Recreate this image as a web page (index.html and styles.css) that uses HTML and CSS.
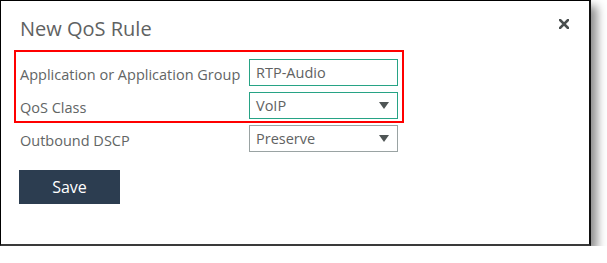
FILE: index.html
```html
<!DOCTYPE html>
<html lang="en">
<head>
	<meta charset="UTF-8">
	<title>New QoS Rule</title>
	<link rel="stylesheet" href="styles.css">
</head>
<body>
	<div class="dialog">
		<div class="head">
			<h2 class="title">New QoS Rule</h2>
			<svg class="close" width="10" height="10" viewBox="0 0 10 10">
				<path d="M1 1L9 9M9 1L1 9" stroke="#4a4f4f" stroke-width="2.6" stroke-linecap="square"/>
			</svg>
		</div>
		<div class="form">
			<div class="mark">
				<div class="row">
					<label class="label">Application or Application Group</label>
					<div class="field active">RTP-Audio</div>
				</div>
				<div class="row">
					<label class="label">QoS Class</label>
					<div class="field active select">
						<span>VoIP</span>
						<svg width="10" height="7" viewBox="0 0 10 7"><path d="M0 0H10L5 7Z" fill="#4f5555"/></svg>
					</div>
				</div>
			</div>
			<div class="row last">
				<label class="label">Outbound DSCP</label>
				<div class="field select">
					<span>Preserve</span>
					<svg width="10" height="7" viewBox="0 0 10 7"><path d="M0 0H10L5 7Z" fill="#4f5555"/></svg>
				</div>
			</div>
			<button class="save">Save</button>
		</div>
	</div>
</body>
</html>
```

FILE: styles.css
```css
*{margin: 0;padding: 0;box-sizing: border-box;}
body{background-color: #fff;font-family: "Open Sans", "Liberation Sans", sans-serif;}
.dialog{
	width: 591px;
	height: 246px;
	background: #fff;
	border-style: solid;
	border-width: 1px 2px 2px 1px;
	border-color: #000 #111 #3a3a3a #000;
	box-shadow: 6px 6px 9px rgba(0,0,0,0.45);
}
.head{
	display: flex;
	justify-content: space-between;
	align-items: flex-start;
	padding: 14px 20px 0 19px;
}
.title{
	font-size: 20px;
	font-weight: 400;
	line-height: 27px;
	color: #5f6262;
}
.close{
	margin-top: 4px;
}
.form{
	padding: 8px 0 0 19px;
}
.mark{
	width: 390px;
	margin-left: -6px;
	border: 2px solid #f00;
	padding: 7px 0 2px 4px;
	display: flex;
	flex-direction: column;
	gap: 6px;
}
.row{
	display: flex;
	align-items: center;
}
.row.last{
	margin-top: 2px;
}
.label{
	width: 229px;
	font-size: 14.5px;
	color: #626565;
	padding-top: 3px;
}
.field{
	width: 149px;
	height: 27px;
	border: 1px solid #9aa3a3;
	padding: 0 8px 0 6px;
	font-size: 14.5px;
	color: #5f6262;
	display: flex;
	align-items: center;
	justify-content: space-between;
}
.field.active{
	border-color: #27a385;
}
.save{
	margin: 18px 0 0 -1px;
	width: 101px;
	height: 34px;
	border: none;
	background: #2c3d50;
	color: #fff;
	font-family: "Open Sans", "Liberation Sans", sans-serif;
	font-size: 16px;
}
```
